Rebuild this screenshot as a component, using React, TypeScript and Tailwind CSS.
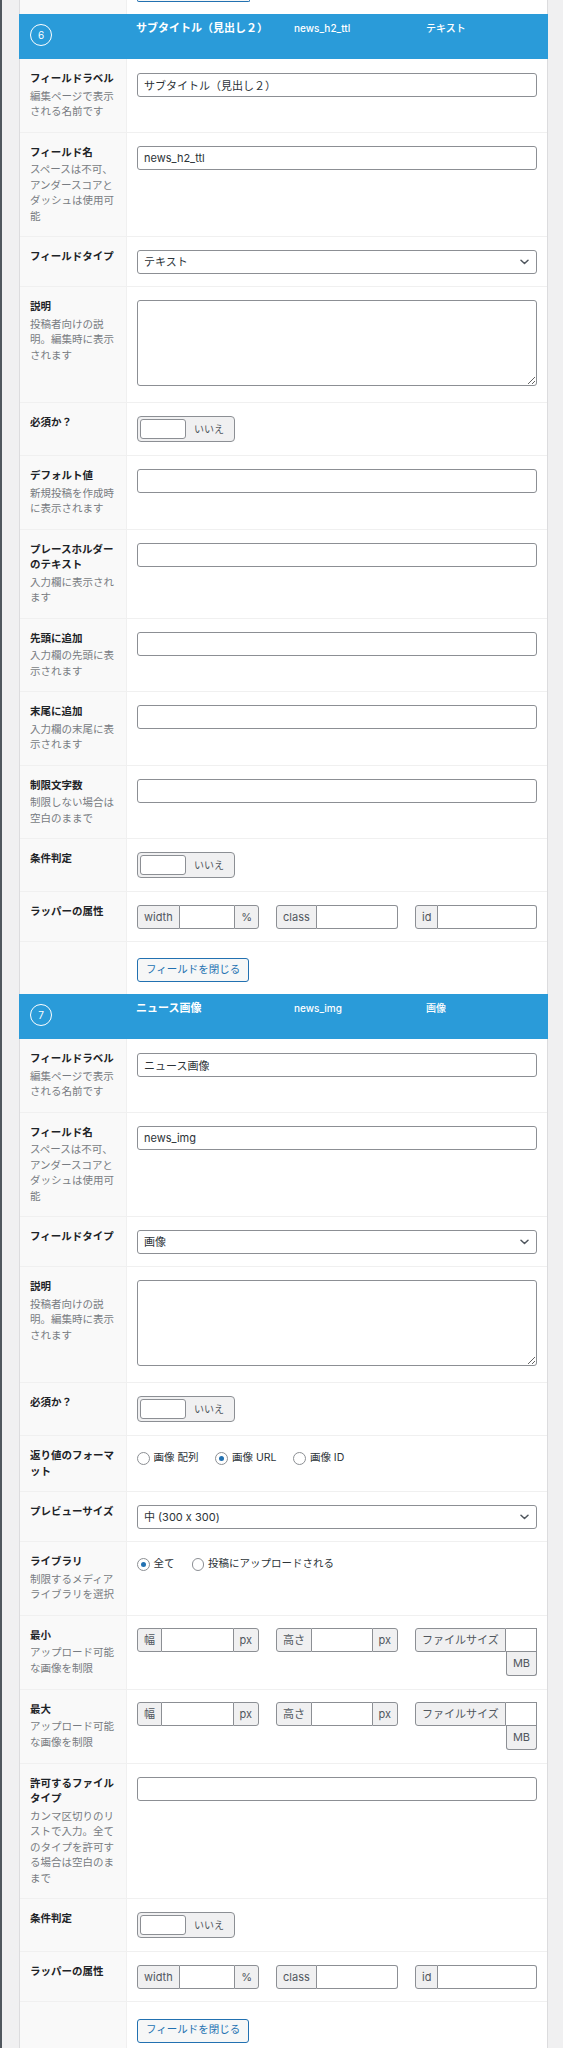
import React from "react";

function Label({ title, desc }: { title?: string; desc?: string }) {
  return (
    <div className="w-[107px] shrink-0 bg-[#f9f9f9] border-r border-[#f0f0f0] px-[10px] pt-[12px] pb-[12px]">
      {title ? (
        <div className="text-[10.5px] leading-[15.5px] font-bold text-[#1d2327]">{title}</div>
      ) : null}
      {desc ? (
        <div className="mt-[2px] text-[10.5px] leading-[15.5px] text-[#787c82]">{desc}</div>
      ) : null}
    </div>
  );
}

function Row({
  title,
  desc,
  pad = "pt-[13px] pb-[12px]",
  top = true,
  children,
}: {
  title?: string;
  desc?: string;
  pad?: string;
  top?: boolean;
  children?: React.ReactNode;
}) {
  return (
    <div className={top ? "flex border-t border-[#f0f0f0]" : "flex"}>
      <Label title={title} desc={desc} />
      <div className={`flex-1 min-w-0 bg-white px-[10px] ${pad}`}>{children}</div>
    </div>
  );
}

function TextInput({ value = "" }: { value?: string }) {
  return (
    <input
      readOnly
      value={value}
      className="block w-full h-[24px] border border-[#8c8f94] rounded-[3px] bg-white px-[6px] text-[11px] text-[#2c3338] outline-none"
    />
  );
}

function Select({ value }: { value: string }) {
  return (
    <div className="h-[24px] border border-[#8c8f94] rounded-[3px] bg-white flex items-center pl-[6px] pr-[7px] text-[11px] text-[#2c3338]">
      <span className="flex-1">{value}</span>
      <svg width="9" height="6" viewBox="0 0 9 6" aria-hidden="true">
        <path d="M1 1.2l3.5 3.3 3.5-3.3" fill="none" stroke="#50575e" strokeWidth="1.5" strokeLinecap="round" strokeLinejoin="round" />
      </svg>
    </div>
  );
}

function TextArea() {
  return (
    <textarea
      readOnly
      className="block w-full h-[86px] border border-[#8c8f94] rounded-[3px] bg-white resize-y outline-none"
    />
  );
}

function Toggle() {
  return (
    <div className="w-[98px] h-[26px] rounded-[4px] border border-[#8c8f94] bg-[#f0f0f1] p-[2px] flex">
      <span className="w-[46px] h-full bg-white border border-[#8c8f94] rounded-[3px]" />
      <span className="flex-1 flex items-center justify-center text-[10px] text-[#50575e]">いいえ</span>
    </div>
  );
}

function Radio({ label, checked = false }: { label: string; checked?: boolean }) {
  return (
    <label className="flex items-center gap-[4px]">
      <span className="w-[12.5px] h-[12.5px] rounded-full border border-[#8c8f94] bg-white flex items-center justify-center">
        {checked ? <span className="w-[5px] h-[5px] rounded-full bg-[#2271b1]" /> : null}
      </span>
      <span className="text-[10.5px] leading-[16px] text-[#2c3338] whitespace-nowrap">{label}</span>
    </label>
  );
}

const PRE =
  "flex items-center border border-[#8c8f94] bg-[#f0f0f1] rounded-l-[3px] px-[6px] text-[11px] text-[#50575e] whitespace-nowrap";
const APP =
  "flex items-center border border-[#8c8f94] bg-[#f0f0f1] rounded-r-[3px] px-[6px] text-[11px] text-[#50575e] whitespace-nowrap";

function PrePostGroup({ pre, post }: { pre: string; post: string }) {
  return (
    <div className="flex-1 flex h-[24px]">
      <span className={PRE}>{pre}</span>
      <span className="flex-1 border-y border-[#8c8f94] bg-white" />
      <span className={APP}>{post}</span>
    </div>
  );
}

function PreGroup({ pre }: { pre: string }) {
  return (
    <div className="flex-1 flex h-[24px]">
      <span className={PRE}>{pre}</span>
      <span className="flex-1 border-y border-r border-[#8c8f94] rounded-r-[3px] bg-white" />
    </div>
  );
}

function FileSizeGroup() {
  return (
    <div className="flex-1 flex flex-col">
      <div className="flex h-[24px]">
        <span className={PRE}>ファイルサイズ</span>
        <span className="flex-1 border-y border-r border-[#8c8f94] bg-white" />
      </div>
      <div className="flex justify-end">
        <span className="w-[31px] h-[24px] border-x border-b border-[#8c8f94] bg-[#f0f0f1] rounded-b-[3px] flex items-center justify-center text-[11px] text-[#50575e]">
          MB
        </span>
      </div>
    </div>
  );
}

function Wrapper() {
  return (
    <div className="flex gap-[17px]">
      <PrePostGroup pre="width" post="%" />
      <PreGroup pre="class" />
      <PreGroup pre="id" />
    </div>
  );
}

function ImageLimits() {
  return (
    <div className="flex gap-[17px] items-start">
      <PrePostGroup pre="幅" post="px" />
      <PrePostGroup pre="高さ" post="px" />
      <FileSizeGroup />
    </div>
  );
}

function CloseButton() {
  return (
    <button className="h-[24px] px-[8px] border border-[#2271b1] rounded-[3px] bg-[#f6f7f7] text-[#2271b1] text-[10.5px] leading-none whitespace-nowrap">
      フィールドを閉じる
    </button>
  );
}

function Header({ n, title, name, type }: { n: number; title: string; name: string; type: string }) {
  return (
    <div className="-mx-[1px] h-[45px] bg-[#2a9bd9] flex text-white">
      <div className="w-[117px] shrink-0 pl-[11px] pt-[10px]">
        <div className="w-[22px] h-[22px] rounded-full border-[1.5px] border-white flex items-center justify-center text-[10px] leading-none">
          {n}
        </div>
      </div>
      <div className="w-[158px] shrink-0 pt-[6px] text-[11px] leading-[16px] font-bold whitespace-nowrap">{title}</div>
      <div className="w-[132px] shrink-0 pt-[6px] text-[10px] leading-[16px] font-medium">{name}</div>
      <div className="pt-[6px] text-[10px] leading-[16px] font-medium">{type}</div>
    </div>
  );
}

const INPUT_FIRST_PAD = "pt-[14px] pb-[12px]";
const TOGGLE_PAD = "pt-[13px] pb-[13px]";
const AREA_PAD = "pt-[13px] pb-[16px]";
const RADIO_PAD = "pt-[14px] pb-[12px]";
const LIMIT_PAD = "pt-[12px] pb-[13px]";

export default function App() {
  return (
    <div className="w-[563px] h-[2048px] overflow-hidden bg-[#f0f0f1] flex font-[family-name:Inter,'Noto_Sans_CJK_JP',sans-serif]">
      <div className="w-[2px] shrink-0 bg-[#50575e]" />
      <div className="ml-[17px] w-[529px] shrink-0 border-x border-[#dcdcde] bg-white">
        {/* bottom of the previous field's close button */}
        <div className="flex h-[14px]">
          <div className="w-[107px] shrink-0 bg-[#f9f9f9] border-r border-[#f0f0f0]" />
          <div className="flex-1 bg-white px-[10px]">
            <div className="w-[113px] h-[2px] border-x border-b border-[#2271b1] rounded-b-[3px] bg-[#f6f7f7]" />
          </div>
        </div>

        {/* field 6 */}
        <Header n={6} title="サブタイトル（見出し２）" name="news_h2_ttl" type="テキスト" />
        <Row title="フィールドラベル" desc="編集ページで表示される名前です" pad={INPUT_FIRST_PAD} top={false}>
          <TextInput value="サブタイトル（見出し２）" />
        </Row>
        <Row title="フィールド名" desc="スペースは不可、アンダースコアとダッシュは使用可能">
          <TextInput value="news_h2_ttl" />
        </Row>
        <Row title="フィールドタイプ">
          <Select value="テキスト" />
        </Row>
        <Row title="説明" desc="投稿者向けの説明。編集時に表示されます" pad={AREA_PAD}>
          <TextArea />
        </Row>
        <Row title="必須か？" pad={TOGGLE_PAD}>
          <Toggle />
        </Row>
        <Row title="デフォルト値" desc="新規投稿を作成時に表示されます">
          <TextInput />
        </Row>
        <Row title="プレースホルダーのテキスト" desc="入力欄に表示されます">
          <TextInput />
        </Row>
        <Row title="先頭に追加" desc="入力欄の先頭に表示されます">
          <TextInput />
        </Row>
        <Row title="末尾に追加" desc="入力欄の末尾に表示されます">
          <TextInput />
        </Row>
        <Row title="制限文字数" desc="制限しない場合は空白のままで">
          <TextInput />
        </Row>
        <Row title="条件判定" pad={TOGGLE_PAD}>
          <Toggle />
        </Row>
        <Row title="ラッパーの属性">
          <Wrapper />
        </Row>
        <Row>
          <CloseButton />
        </Row>

        {/* field 7 */}
        <Header n={7} title="ニュース画像" name="news_img" type="画像" />
        <Row title="フィールドラベル" desc="編集ページで表示される名前です" pad={INPUT_FIRST_PAD} top={false}>
          <TextInput value="ニュース画像" />
        </Row>
        <Row title="フィールド名" desc="スペースは不可、アンダースコアとダッシュは使用可能">
          <TextInput value="news_img" />
        </Row>
        <Row title="フィールドタイプ">
          <Select value="画像" />
        </Row>
        <Row title="説明" desc="投稿者向けの説明。編集時に表示されます" pad={AREA_PAD}>
          <TextArea />
        </Row>
        <Row title="必須か？" pad={TOGGLE_PAD}>
          <Toggle />
        </Row>
        <Row title="返り値のフォーマット" pad={RADIO_PAD}>
          <div className="flex items-center gap-[17px]">
            <Radio label="画像 配列" />
            <Radio label="画像 URL" checked />
            <Radio label="画像 ID" />
          </div>
        </Row>
        <Row title="プレビューサイズ">
          <Select value="中 (300 x 300)" />
        </Row>
        <Row title="ライブラリ" desc="制限するメディアライブラリを選択" pad={RADIO_PAD}>
          <div className="flex items-center gap-[17px]">
            <Radio label="全て" checked />
            <Radio label="投稿にアップロードされる" />
          </div>
        </Row>
        <Row title="最小" desc="アップロード可能な画像を制限" pad={LIMIT_PAD}>
          <ImageLimits />
        </Row>
        <Row title="最大" desc="アップロード可能な画像を制限" pad={LIMIT_PAD}>
          <ImageLimits />
        </Row>
        <Row
          title="許可するファイルタイプ"
          desc="カンマ区切りのリストで入力。全てのタイプを許可する場合は空白のままで"
        >
          <TextInput />
        </Row>
        <Row title="条件判定" pad={TOGGLE_PAD}>
          <Toggle />
        </Row>
        <Row title="ラッパーの属性">
          <Wrapper />
        </Row>
        <Row>
          <CloseButton />
        </Row>
      </div>
    </div>
  );
}
